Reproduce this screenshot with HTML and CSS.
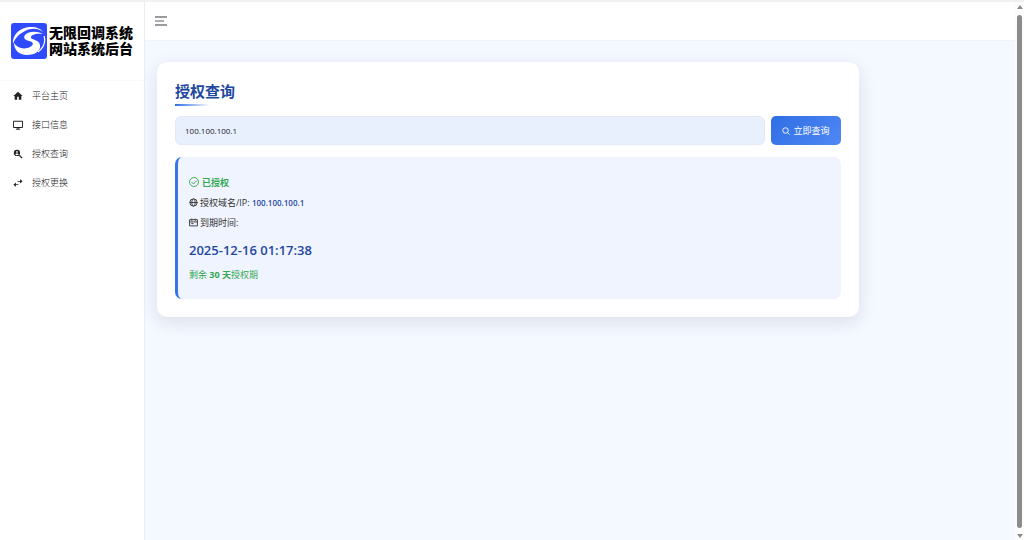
FILE: index.html
```html
<!DOCTYPE html>
<html lang="zh-CN">
<head>
  <meta charset="UTF-8">
  <meta name="viewport" content="width=device-width, initial-scale=1.0">
  <title>授权查询</title>
  <link rel="stylesheet" href="styles.css">
</head>
<body>

  <div class="layout">
    <!-- Sidebar -->
    <aside class="sidebar">
      <div class="logo">
        <svg class="logo-mark" viewBox="0 0 36 36">
          <rect width="36" height="36" rx="3" fill="#2f4bff"/>
          <path fill="#fff" d="M32 11C26 8 18 8 14 12C12 15 14 17 18 18C23 19 23 22 19 24C13 27 6 25 3 20C3 27 8 32 16 32C24 32 30 28 29 22C28 17 22 17 20 15C19 12 25 10 32 11Z"/>
          <path fill="#fff" d="M2 21C1 11 10 4 20 4C26 4 30 6 32 9C27 5 20 5 14 8C8 11 4 15 2 21Z"/>
          <path fill="none" stroke="#fff" stroke-width="1.2" d="M33 13C35 19 32 25 27 29"/>
        </svg>
        <div class="logo-text">
          <div>无限回调系统</div>
          <div>网站系统后台</div>
        </div>
      </div>
      <nav class="menu">
        <a href="#home">
          <svg viewBox="0 0 24 24"><path fill="#222" d="M12 2 1 12h3v9h6v-7h4v7h6v-9h3z"/></svg>
          平台主页
        </a>
        <a href="#api">
          <svg viewBox="0 0 24 24"><path fill="none" stroke="#222" stroke-width="2.4" d="M1 3h22v15H1zM12 18v4M7 22h10"/></svg>
          接口信息
        </a>
        <a href="#query">
          <svg viewBox="0 0 24 24"><circle cx="9.500" cy="9.500" r="7.500" fill="#222"/><path fill="none" stroke="#222" stroke-width="3" d="m15 15 7 7"/><circle cx="9.500" cy="7" r="2" fill="#fff"/><path fill="#fff" d="M5.500 13c1-3 7-3 8 0-2 2.500-6 2.500-8 0z"/></svg>
          授权查询
        </a>
        <a href="#change">
          <svg viewBox="0 0 24 24"><path fill="#222" d="M17 3l6 5-6 5v-4H11V7h6zM7 11l-6 5 6 5v-4h6v-2H7z"/></svg>
          授权更换
        </a>
      </nav>
    </aside>

    <!-- Main -->
    <div class="main">
      <header class="topbar">
        <button class="toggle" type="button" aria-label="菜单">
          <svg viewBox="0 0 14 10"><path fill="none" stroke="#333940" stroke-width="1.200" d="M1 1h12M1 9h12"/><path stroke="#777" stroke-width="1.200" d="M1 5h9"/></svg>
        </button>
      </header>
      <main class="content">
        <section class="card">
          <h1>授权查询</h1>
          <form class="search">
            <input type="text" value="100.100.100.1" aria-label="授权域名/IP">
            <button type="submit">
              <svg viewBox="0 0 16 16"><circle cx="7" cy="7" r="5.500" fill="none" stroke="#fff" stroke-width="1.800"/><path stroke="#fff" stroke-width="1.800" d="m11 11 4 4"/></svg>
              立即查询
            </button>
          </form>
          <div class="result">
            <p class="status">
              <svg viewBox="0 0 20 20"><circle cx="10" cy="10" r="9" fill="none" stroke="#34a853" stroke-width="1.800"/><path fill="none" stroke="#34a853" stroke-width="1.800" d="m5 10 4 4 7-7"/></svg>
              <strong>已授权</strong>
            </p>
            <p>
              <svg viewBox="0 0 16 16"><g fill="none" stroke="#333" stroke-width="1.600"><circle cx="8" cy="8" r="6.500"/><ellipse cx="8" cy="8" rx="3" ry="6.500"/><path d="M1 8h14"/></g></svg>
              <span>授权域名/IP: <span class="ip">100.100.100.1</span></span>
            </p>
            <p>
              <svg viewBox="0 0 16 16"><path fill="none" stroke="#333" stroke-width="1.600" d="M1 3h14v11H1zM1 7h14M5 1v4M11 1v4M4 10h4"/></svg>
              <span>到期时间:</span>
            </p>
            <div class="expire">2025-12-16 01:17:38</div>
            <div class="remain">剩余 <strong>30 天</strong>授权期</div>
          </div>
        </section>
      </main>
    </div>

    <!-- Scroll track -->
    <div class="scrollbar">
      <span class="arrow-up"></span>
      <span class="thumb"></span>
      <span class="arrow-down"></span>
    </div>
  </div>

</body>
</html>
```

FILE: styles.css
```css
* {
  box-sizing: border-box;
}
body {
  margin: 0;
  font-family: "Open Sans", "Noto Sans CJK SC", sans-serif;
  font-size: 9px;
  color: #333;
  background-color: #f4f8ff;
}
.layout {
  display: flex;
  min-height: 100vh;
  border-top: 2px solid #f0f0f0;
}
.sidebar {
  flex: 0 0 145px;
  background-color: #fff;
  border-right: 1px solid #e9edf8;
}
.logo {
  display: flex;
  align-items: center;
  gap: 2px;
  height: 79px;
  padding-left: 11px;
  border-bottom: 1px solid #f9f9f9;
}
.logo-mark {
  width: 36px;
  height: 36px;
}
.logo-text {
  font-family: "Liberation Sans", "Noto Sans CJK SC", sans-serif;
  font-size: 14px;
  font-weight: 900;
  line-height: 16px;
  color: #000;
  white-space: nowrap;
}
.menu a {
  display: flex;
  align-items: center;
  gap: 9px;
  height: 29px;
  padding-left: 13px;
  font-weight: 300;
  color: #222;
  text-decoration: none;
}
.menu svg {
  width: 10px;
  height: 10px;
}
.main {
  flex: 1;
  min-width: 0;
}
.topbar {
  display: flex;
  align-items: center;
  height: 39px;
  padding-left: 9px;
  background-color: #fff;
  border-bottom: 1px solid #f0f3fa;
}
.toggle {
  display: flex;
  padding: 0;
  border: none;
  background: none;
}
.toggle svg {
  width: 14px;
  height: 10px;
}
.content {
  padding: 21px 12px;
}
.card {
  max-width: 702px;
  padding: 18px;
  background-color: #fff;
  border-radius: 10px;
  box-shadow: 0 5px 18px rgba(30, 40, 80, 0.12);
}
h1 {
  margin: 0 0 10px;
  padding-bottom: 4px;
  font-size: 15px;
  line-height: 22px;
  color: #1e48a0;
  background: linear-gradient(90deg, #2f6fe4, #fff) left bottom / 35px 2px no-repeat;
}
.search {
  display: flex;
  gap: 6px;
  margin-bottom: 12px;
}
.search input {
  flex: 1;
  min-width: 0;
  height: 29px;
  padding: 0 9px;
  border: 1px solid #e3eaf5;
  border-radius: 6px;
  background-color: #e8f0fe;
  font-family: inherit;
  font-size: 8px;
  color: #222;
}
.search button {
  display: flex;
  align-items: center;
  justify-content: center;
  gap: 3px;
  width: 70px;
  padding: 0;
  border: none;
  border-radius: 5px;
  background: linear-gradient(135deg, #2f6fe4, #5087f5);
  font-family: inherit;
  font-size: 9px;
  color: #fff;
}
.search button svg {
  width: 8px;
  height: 8px;
}
.result {
  padding: 16px 11px;
  border-left: 3px solid #3575e8;
  border-radius: 7px;
  background-color: #f0f4ff;
}
.result p {
  display: flex;
  align-items: center;
  gap: 2px;
  margin: 0;
  line-height: 20px;
}
.result svg {
  width: 9px;
  height: 9px;
  margin-bottom: 2px;
}
.result .status {
  gap: 3px;
  color: #34a853;
}
.status svg {
  width: 10px;
  height: 10px;
}
.ip {
  font-size: 8px;
  font-weight: 600;
  color: #1e48a0;
}
.expire {
  margin: 7px 0;
  font-size: 13px;
  font-weight: 600;
  line-height: 20px;
  color: #1e48a0;
}
.remain {
  line-height: 16px;
  color: #34a853;
}
.scrollbar {
  display: flex;
  flex: 0 0 9px;
  flex-direction: column;
  align-items: center;
  gap: 6px;
  padding: 3px 0 2px;
  background-color: #fcfcfc;
}
.arrow-up,
.arrow-down {
  border: 3px solid transparent;
}
.arrow-up {
  border-top: none;
  border-bottom: 4px solid #8b8b8b;
}
.arrow-down {
  border-bottom: none;
  border-top: 4px solid #8b8b8b;
}
.thumb {
  flex: 1;
  width: 5px;
  border-radius: 3px;
  background-color: #8b8b8b;
}
```
